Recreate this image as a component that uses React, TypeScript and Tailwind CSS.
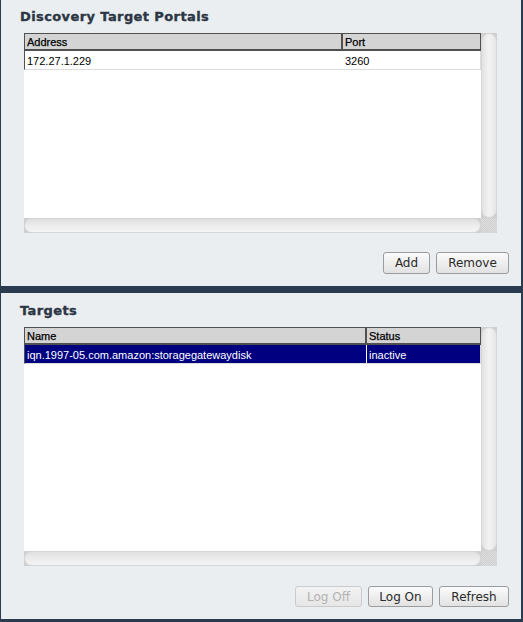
import React from "react";

type Col = { label: string; width: number };

function VScroll() {
  return (
    <div className="w-[16px] h-full bg-[#cfcfcf] flex">
      <div className="flex-1 rounded-[8px] border border-[#d6d6d6] bg-gradient-to-r from-[#e2e2e2] via-[#f3f3f3] to-[#e6e6e6]" />
    </div>
  );
}

function HScroll() {
  return (
    <div className="h-[15px] w-full bg-[#cfcfcf] flex">
      <div className="flex-1 rounded-[8px] border border-[#d6d6d6] bg-gradient-to-b from-[#e0e0e0] via-[#ececec] to-[#f4f4f4]" />
    </div>
  );
}

function Table({
  cols,
  rows,
  selected,
}: {
  cols: Col[];
  rows: string[][];
  selected?: number;
}) {
  return (
    <div className="ml-[23px] w-[473px] flex-1 grid grid-cols-[457px_16px] grid-rows-[1fr_15px] min-h-0">
      <div className="bg-white overflow-hidden font-['Liberation_Sans',Arial,sans-serif] text-[11px] text-black">
        <div className="flex h-[18px] bg-[#d4d4d4] border border-[#505050] border-b-[2px] leading-[16px] [-webkit-text-stroke:0.25px_#000]">
          {cols.map((c, i) => (
            <div
              key={i}
              className={
                i < cols.length - 1
                  ? "pl-[2px] border-r-[2px] border-r-[#505050] shrink-0"
                  : "pl-[2px] flex-1"
              }
              style={{ width: i < cols.length - 1 ? c.width : undefined }}
            >
              {c.label}
            </div>
          ))}
        </div>
        {rows.map((r, ri) => (
          <div
            key={ri}
            className={
              ri === selected
                ? "flex h-[19px] leading-[20px] bg-[#000080] text-white border-l border-l-[#505050] border-b border-b-[#dcdcdc] border-r border-r-[#dcdcdc]"
                : "flex h-[19px] leading-[20px] border-l border-l-[#505050] border-b border-b-[#dcdcdc] border-r border-r-[#dcdcdc]"
            }
          >
            {r.map((cell, ci) => (
              <div
                key={ci}
                className={
                  ci < r.length - 1
                    ? "pl-[2px] shrink-0 border-r border-r-white"
                    : "pl-[2px] flex-1"
                }
                style={{ width: ci < r.length - 1 ? cols[ci].width : undefined }}
              >
                {cell}
              </div>
            ))}
          </div>
        ))}
      </div>
      <VScroll />
      <HScroll />
      <div className="bg-[repeating-conic-gradient(#cfcfcf_0_25%,#dedede_0_50%)] bg-[length:2px_2px]" />
    </div>
  );
}

function Btn({ label, w, h, disabled }: { label: string; w: number; h: number; disabled?: boolean }) {
  return (
    <div
      className={
        disabled
          ? "flex items-center justify-center rounded-[3px] border border-[#cbcbcb] bg-gradient-to-b from-[#f3f3f3] to-[#e6e6e6] text-[#b2b2b2] font-['DejaVu_Sans',sans-serif] text-[12px]"
          : "flex items-center justify-center rounded-[3px] border border-[#9c9c9c] bg-gradient-to-b from-[#fbfbfb] to-[#e2e2e2] text-[#2a2a2a] font-['DejaVu_Sans',sans-serif] text-[12px]"
      }
      style={{ width: w, height: h }}
    >
      {label}
    </div>
  );
}

function Panel({
  title,
  cols,
  rows,
  selected,
  buttons,
  className,
  btnH,
  gapTop,
}: {
  title: string;
  cols: Col[];
  rows: string[][];
  selected?: number;
  buttons: { label: string; w: number; disabled?: boolean }[];
  className: string;
  btnH: number;
  gapTop: string;
}) {
  return (
    <div className={"bg-[#ebeef0] flex flex-col " + className}>
      <div className="h-[33px] pl-[19px] pt-[9px] leading-[16px] font-['DejaVu_Sans',sans-serif] font-bold text-[13px] text-[#2c3644] tracking-[0.4px] [-webkit-text-stroke:0.35px_#2c3644]">
        {title}
      </div>
      <Table cols={cols} rows={rows} selected={selected} />
      <div className={"flex justify-end gap-[6px] pr-[12px] pb-[12px] " + gapTop}>
        {buttons.map((b) => (
          <Btn key={b.label} h={btnH} {...b} />
        ))}
      </div>
    </div>
  );
}

export default function App() {
  return (
    <div className="w-[523px] h-[622px] bg-[#2b3b4f] pl-[1px] pr-[2px] pb-[3px] flex flex-col gap-[7px]">
      <Panel
        className="h-[286px] shrink-0"
        title="Discovery Target Portals"
        cols={[
          { label: "Address", width: 318 },
          { label: "Port", width: 0 },
        ]}
        rows={[["172.27.1.229", "3260"]]}
        btnH={22}
        gapTop="pt-[19px]"
        buttons={[
          { label: "Add", w: 47 },
          { label: "Remove", w: 73 },
        ]}
      />
      <Panel
        className="flex-1 min-h-0 pt-[1px]"
        title="Targets"
        cols={[
          { label: "Name", width: 342 },
          { label: "Status", width: 0 },
        ]}
        rows={[["iqn.1997-05.com.amazon:storagegatewaydisk", "inactive"]]}
        selected={0}
        btnH={21}
        gapTop="pt-[20px]"
        buttons={[
          { label: "Log Off", w: 67, disabled: true },
          { label: "Log On", w: 65 },
          { label: "Refresh", w: 70 },
        ]}
      />
    </div>
  );
}
